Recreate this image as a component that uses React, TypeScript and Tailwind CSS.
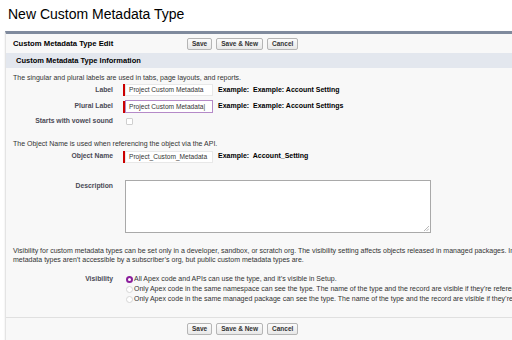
export default function App() {
  const btn =
    "h-[12px] px-[4px] border border-[#b5b5b5] rounded-[2px] bg-gradient-to-b from-[#fbfbfb] to-[#e8e8e8] text-[6.5px] font-bold text-[#333] leading-[10px]"

  const Buttons = () => (
    <div className="flex gap-[4px]">
      <button className={btn}>Save</button>
      <button className={btn}>Save &amp; New</button>
      <button className={btn}>Cancel</button>
    </div>
  )

  return (
    <div className="w-[512px] h-[340px] overflow-hidden bg-white font-['Liberation_Sans',Arial,sans-serif] text-[#222]">
      <h1 className="pl-[8px] pt-[6px] text-[14px] leading-[17px] text-black">New Custom Metadata Type</h1>

      {/* Panel */}
      <div className="ml-[5px] mt-[8px] w-[640px] h-[340px] bg-[#f8f8f8] border-t-[3px] border-t-[#7f8a9d] border-l border-l-[#e4e4e4] rounded-b-[4px] shadow-[0_1px_2px_rgba(0,0,0,0.12)]">
        {/* Edit header */}
        <div className="flex items-center h-[19px] pl-[7px]">
          <div className="w-[174px] text-[7.7px] font-bold text-black">Custom Metadata Type Edit</div>
          <Buttons />
        </div>

        {/* Section bar */}
        <div className="h-[15px] bg-[#e3e7ee] flex items-center pl-[10px] text-[7.5px] font-bold text-black">
          Custom Metadata Type Information
        </div>

        <p className="mt-[5px] pl-[7px] text-[7px] leading-[9px] text-[#333]">
          The singular and plural labels are used in tabs, page layouts, and reports.
        </p>

        {/* Label */}
        <div className="mt-[2px] flex items-center h-[12px]">
          <div className="w-[107px] text-right text-[6.8px] font-bold text-[#4a4a56]">Label</div>
          <div className="ml-[10px] w-[2px] h-[12px] bg-[#c00]" />
          <div className="w-[88px] h-[12px] bg-white border border-[#e8e8e8] text-[6.6px] leading-[10px] pl-[3px] text-[#333] whitespace-nowrap overflow-hidden">
            Project Custom Metadata
          </div>
          <div className="ml-[5px] text-[7px] font-bold text-black">Example:&nbsp; Example: Account Setting</div>
        </div>

        {/* Plural Label */}
        <div className="mt-[4px] flex items-center h-[13px]">
          <div className="w-[107px] text-right text-[6.8px] font-bold text-[#4a4a56]">Plural Label</div>
          <div className="ml-[10px] w-[2px] h-[12px] bg-[#c00]" />
          <div className="w-[88px] h-[13px] bg-white border border-[#b58ac8] text-[6.6px] leading-[11px] pl-[3px] text-[#333] whitespace-nowrap overflow-hidden">
            Project Custom Metadata|
          </div>
          <div className="ml-[5px] text-[7px] font-bold text-black">Example:&nbsp; Example: Account Settings</div>
        </div>

        {/* Vowel */}
        <div className="mt-[4px] flex items-center h-[9px]">
          <div className="w-[107px] text-right text-[6.8px] font-bold text-[#4a4a56]">Starts with vowel sound</div>
          <div className="ml-[13px] w-[7px] h-[7px] bg-white border border-[#cfcfcf] rounded-[1px]" />
        </div>

        <p className="mt-[13px] pl-[7px] text-[7px] leading-[9px] text-[#333]">
          The Object Name is used when referencing the object via the API.
        </p>

        {/* Object Name */}
        <div className="mt-[2px] flex items-center h-[13px]">
          <div className="w-[107px] text-right text-[6.8px] font-bold text-[#4a4a56]">Object Name</div>
          <div className="ml-[10px] w-[2px] h-[12px] bg-[#c00]" />
          <div className="w-[88px] h-[12px] bg-white border border-[#e8e8e8] text-[6.6px] leading-[10px] pl-[3px] text-[#333] whitespace-nowrap overflow-hidden">
            Project_Custom_Metadata
          </div>
          <div className="ml-[5px] text-[7px] font-bold text-black">Example:&nbsp; Account_Setting</div>
        </div>

        {/* Description */}
        <div className="mt-[17px] flex">
          <div className="w-[107px] text-right text-[6.8px] font-bold text-[#4a4a56] pt-[1px]">Description</div>
          <div className="relative ml-[12px] w-[306px] h-[53px] bg-white border border-[#a9a9a9]">
            <svg className="absolute right-[1px] bottom-[1px]" width="5" height="5" viewBox="0 0 5 5">
              <path d="M5 0 L0 5 M5 2.5 L2.5 5" stroke="#999" strokeWidth="0.7" />
            </svg>
          </div>
        </div>

        {/* Visibility paragraph */}
        <p className="mt-[14px] pl-[7px] text-[7px] leading-[8.5px] text-[#333] whitespace-nowrap">
          Visibility for custom metadata types can be set only in a developer, sandbox, or scratch org. The visibility setting affects objects released in managed packages. In
          <br />
          metadata types aren’t accessible by a subscriber’s org, but public custom metadata types are.
        </p>

        {/* Visibility radios */}
        <div className="mt-[10px] flex">
          <div className="w-[107px] text-right text-[6.8px] font-bold text-[#4a4a56] leading-[10px]">Visibility</div>
          <div className="ml-[13px] flex flex-col text-[7px] text-[#333] whitespace-nowrap">
            <div className="flex items-center h-[10px]">
              <span className="w-[7px] h-[7px] rounded-full border-[2px] border-[#8b1f9c] bg-white" />
              <span className="ml-[1px]">All Apex code and APIs can use the type, and it’s visible in Setup.</span>
            </div>
            <div className="flex items-center h-[10px]">
              <span className="w-[7px] h-[7px] rounded-full border border-[#d6d6d6] bg-white" />
              <span className="ml-[1px]">
                Only Apex code in the same namespace can see the type. The name of the type and the record are visible if they’re referenced
              </span>
            </div>
            <div className="flex items-center h-[10px]">
              <span className="w-[7px] h-[7px] rounded-full border border-[#d6d6d6] bg-white" />
              <span className="ml-[1px]">
                Only Apex code in the same managed package can see the type. The name of the type and the record are visible if they’re referenced
              </span>
            </div>
          </div>
        </div>

        {/* Footer */}
        <div className="mt-[13px] border-t border-t-[#e0e0e0] pt-[5px] pl-[181px]">
          <Buttons />
        </div>
      </div>
    </div>
  )
}
